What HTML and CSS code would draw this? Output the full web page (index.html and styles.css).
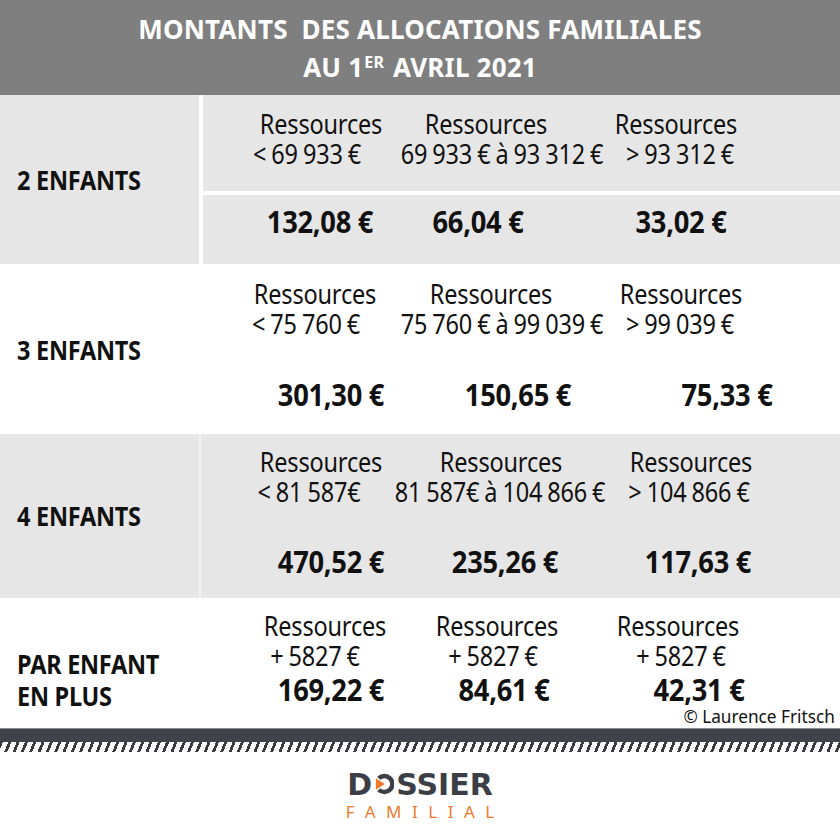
FILE: index.html
```html
<!DOCTYPE html>
<html lang="fr">
<head>
<meta charset="utf-8">
<title>Montants des allocations familiales au 1er avril 2021</title>
<link rel="stylesheet" href="styles.css">
</head>
<body>
<div class="page">
  <header class="title">
    <div class="title-line">MONTANTS&nbsp; DES ALLOCATIONS FAMILIALES</div>
    <div class="title-line">AU 1<sup>ER</sup> AVRIL 2021</div>
  </header>

  <section class="row row-a">
    <div class="label"><span class="label-text">2 ENFANTS</span></div>
    <div class="divider"></div>
    <div class="cells split">
      <div class="part part-top">
        <div class="ln r1a"><span class="c">Ressources</span><span class="c">Ressources</span><span class="c">Ressources</span></div>
        <div class="ln r1b"><span class="c">&lt; 69 933 €</span><span class="c">69 933 € à 93 312 €</span><span class="c">&gt; 93 312 €</span></div>
      </div>
      <div class="part part-bottom">
        <div class="ln amt r1c"><span class="c">132,08 €</span><span class="c">66,04 €</span><span class="c">33,02 €</span></div>
      </div>
    </div>
  </section>

  <section class="row row-b">
    <div class="label"><span class="label-text">3 ENFANTS</span></div>
    <div class="divider"></div>
    <div class="cells">
      <div class="ln r2a"><span class="c">Ressources</span><span class="c">Ressources</span><span class="c">Ressources</span></div>
      <div class="ln r2b"><span class="c">&lt; 75 760 €</span><span class="c">75 760 € à 99 039 €</span><span class="c">&gt; 99 039 €</span></div>
      <div class="ln amt r2c gap-lg"><span class="c">301,30 €</span><span class="c">150,65 €</span><span class="c">75,33 €</span></div>
    </div>
  </section>

  <section class="row row-c">
    <div class="label"><span class="label-text">4 ENFANTS</span></div>
    <div class="divider"></div>
    <div class="cells">
      <div class="ln r3a"><span class="c">Ressources</span><span class="c">Ressources</span><span class="c">Ressources</span></div>
      <div class="ln r3b"><span class="c">&lt; 81 587€</span><span class="c">81 587€ à 104 866 €</span><span class="c">&gt; 104 866 €</span></div>
      <div class="ln amt r3c gap-md"><span class="c">470,52 €</span><span class="c">235,26 €</span><span class="c">117,63 €</span></div>
    </div>
  </section>

  <section class="row row-d">
    <div class="label label-top"><span class="label-text">PAR ENFANT<br>EN PLUS</span></div>
    <div class="divider"></div>
    <div class="cells">
      <div class="ln r4a"><span class="c">Ressources</span><span class="c">Ressources</span><span class="c">Ressources</span></div>
      <div class="ln r4b"><span class="c">+ 5827 €</span><span class="c">+ 5827 €</span><span class="c">+ 5827 €</span></div>
      <div class="ln amt r4c gap-sm"><span class="c">169,22 €</span><span class="c">84,61 €</span><span class="c">42,31 €</span></div>
      <div class="credit">© Laurence Fritsch</div>
    </div>
  </section>

  <div class="bar"></div>
  <div class="hatch"></div>

  <footer class="logo">
    <div class="logo-top">D<svg class="logo-o" viewBox="0 0 22 22" width="21" height="22" aria-hidden="true"><path d="M6 5 A8.4 8.4 0 1 1 6 17" fill="none" stroke="#3b3e44" stroke-width="4.6"/><path d="M3 5 L12.4 11 L3 17 Z" fill="#f07a2c"/></svg>SSIER</div>
    <div class="logo-bottom">FAMILIAL</div>
  </footer>
</div>
</body>
</html>
```

FILE: styles.css
```css
html, body {
  margin: 0;
  padding: 0;
  background: #ffffff;
}

body {
  font-family: "Noto Sans", "Liberation Sans", sans-serif;
  color: #111111;
}

.page {
  width: 840px;
  height: 840px;
  overflow: hidden;
}

/* ---------- header ---------- */
.title {
  height: 95px;
  background: #7f7f7f;
  color: #ffffff;
  font-weight: 700;
  font-size: 26px;
  line-height: 38px;
  letter-spacing: 0.2px;
  text-align: center;
  display: flex;
  flex-direction: column;
  justify-content: center;
}

.title sup {
  font-size: 16px;
  line-height: 0;
  vertical-align: 9px;
  margin: 0 2px 0 1px;
}

/* ---------- rows ---------- */
.row {
  display: grid;
  grid-template-columns: 199px 4px 1fr;
}

.row-a { height: 170px; background: #ffffff; }
.row-b { height: 169px; background: #ffffff; }
.row-c { height: 164px; background: #e7e6e6; }
.row-d { height: 130px; background: #ffffff; }

.row-a .label { background: #e7e6e6; height: 169px; }
.row-a .divider { background: #ffffff; }
.row-c .divider { background: linear-gradient(to right, #f3f3f3 0 2px, #e7e6e6 2px); }

.label {
  display: flex;
  align-items: center;
  padding-left: 17px;
  font-weight: 700;
  font-size: 27px;
  letter-spacing: -0.3px;
  line-height: 32px;
}

.label-text {
  display: block;
  white-space: nowrap;
  transform: scaleX(0.87);
  transform-origin: left center;
}

.label-top {
  align-items: flex-start;
  padding-top: 50px;
}

.cells {
  display: flex;
  flex-direction: column;
  padding-top: 14px;
}

.row-c .cells,
.row-d .cells { padding-top: 13px; }

.split {
  padding-top: 0;
  height: 169px;
}

.part {
  background: #e7e6e6;
}

.part-top {
  height: 96px;
  padding-top: 14px;
  box-sizing: border-box;
}

.part-bottom {
  margin-top: 4px;
  height: 69px;
  padding-top: 12px;
  box-sizing: border-box;
}

/* a line of three centred entries */
.ln {
  display: flex;
  height: 30px;
  line-height: 30px;
  font-size: 27px;
  letter-spacing: -0.2px;
  word-spacing: -1px;
}

.amt {
  font-weight: 700;
  font-size: 30px;
  letter-spacing: -0.3px;
  word-spacing: 0;
}

.c {
  width: 0;
  display: flex;
  justify-content: center;
  white-space: nowrap;
  transform: scaleX(0.87);
}

.amt .c {
  transform: scaleX(0.91);
}

.c:nth-child(1) { margin-left: var(--x1); }
.c:nth-child(2) { margin-left: calc(var(--x2) - var(--x1)); }
.c:nth-child(3) { margin-left: calc(var(--x3) - var(--x2)); }

.gap-lg { margin-top: 41px; }
.gap-md { margin-top: 40px; }
.gap-sm { margin-top: 4px; }

.r1a { --x1: 118px; --x2: 283px; --x3: 473px; }
.r1b { --x1: 104px; --x2: 299px; --x3: 477px; }
.r1c { --x1: 117px; --x2: 275px; --x3: 478px; }

.r2a { --x1: 112px; --x2: 288px; --x3: 478px; }
.r2b { --x1: 103px; --x2: 299px; --x3: 477px; }
.r2c { --x1: 128px; --x2: 315px; --x3: 524px; }

.r3a { --x1: 118px; --x2: 298px; --x3: 488px; }
.r3b { --x1: 106px; --x2: 297px; --x3: 486px; }
.r3c { --x1: 128px; --x2: 302px; --x3: 495px; }

.r4a { --x1: 122px; --x2: 294px; --x3: 475px; }
.r4b { --x1: 112px; --x2: 290px; --x3: 478px; }
.r4c { --x1: 128px; --x2: 301px; --x3: 496px; }

.credit {
  margin-top: 1px;
  align-self: flex-end;
  margin-right: 5px;
  font-size: 18.5px;
  line-height: 20px;
  white-space: nowrap;
  transform: scaleX(0.93);
  transform-origin: right center;
}

/* ---------- footer ---------- */
.bar {
  height: 13px;
  background: #41414a;
  border-top: 1px solid #8c8c8c;
}

.hatch {
  height: 10px;
  background: repeating-linear-gradient(112deg, #3a3a40 0 2.8px, #ffffff 2.8px 7.7px);
}

.logo {
  display: flex;
  flex-direction: column;
  align-items: center;
  padding-top: 18px;
}

.logo-top {
  font-family: "DejaVu Sans", "Noto Sans", sans-serif;
  font-weight: 700;
  font-size: 30px;
  line-height: 30px;
  letter-spacing: 0;
  color: #3b3e44;
}

.logo-o {
  vertical-align: baseline;
  margin: 0 2px 0 1px;
}

.logo-bottom {
  margin-top: 3px;
  font-size: 17px;
  line-height: 17px;
  letter-spacing: 10.5px;
  margin-right: -10.5px;
  color: #f07a2c;
}
```
